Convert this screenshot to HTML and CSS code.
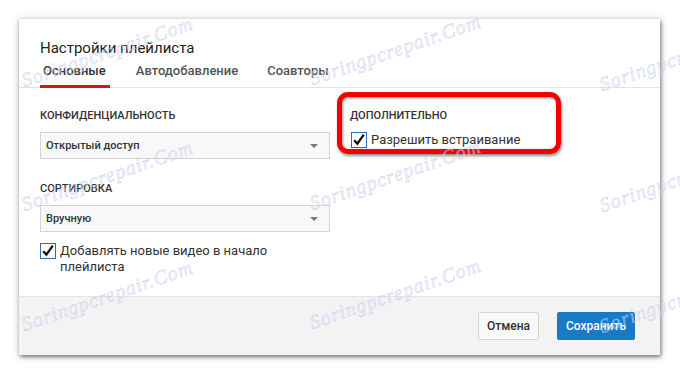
FILE: index.html
```html
<!DOCTYPE html>
<html>
  <head>
    <title>Настройки плейлиста</title>
    <meta charset="utf-8">
    <link rel="stylesheet" href="styles.css">
  </head>
  <body>
    <div class="dialog">
      <div class="dialog-header">
        <h2 class="dialog-title">Настройки плейлиста</h2>
        <div class="tabs">
          <span class="tab active">Основные</span>
          <span class="tab">Автодобавление</span>
          <span class="tab">Соавторы</span>
        </div>
      </div>

      <div class="dialog-body">
        <div class="column left">
          <div class="section-label">Конфиденциальность</div>
          <div class="select">
            <span>Открытый доступ</span>
            <span class="arrow"></span>
          </div>
          <div class="section-label second">Сортировка</div>
          <div class="select">
            <span>Вручную</span>
            <span class="arrow"></span>
          </div>
          <label class="check">
            <svg class="box" width="16" height="16" viewBox="0 0 16 16">
              <rect x="0.5" y="0.5" width="15" height="15" fill="#fff" stroke="#2d6db5"/>
              <path d="M3.2 8.2 L6.4 11.6 L12.8 2.6" fill="none" stroke="#111" stroke-width="2.3"/>
            </svg>
            <span>Добавлять новые видео в начало плейлиста</span>
          </label>
        </div>
        <div class="column right">
          <div class="section-label">Дополнительно</div>
          <label class="check single">
            <svg class="box" width="16" height="16" viewBox="0 0 16 16">
              <rect x="0.5" y="0.5" width="15" height="15" fill="#fff" stroke="#2d6db5"/>
              <path d="M3.2 8.2 L6.4 11.6 L12.8 2.6" fill="none" stroke="#111" stroke-width="2.3"/>
            </svg>
            <span>Разрешить встраивание</span>
          </label>
        </div>
        <!-- красная рамка-выделение поверх блока -->
        <div class="highlight"></div>
      </div>

      <div class="dialog-footer">
        <button type="button" class="btn cancel">Отмена</button>
        <button type="button" class="btn primary">Сохранить</button>
      </div>
    </div>

    <div class="watermarks">
      <span class="wm" style="left:26px;top:68px">Soringpcrepair.Com</span>
      <span class="wm" style="left:314px;top:66px">Soringpcrepair.Com</span>
      <span class="wm" style="left:604px;top:72px">Soringpcrepair.Com</span>
      <span class="wm" style="left:26px;top:192px">Soringpcrepair.Com</span>
      <span class="wm" style="left:314px;top:191px">Soringpcrepair.Com</span>
      <span class="wm" style="left:604px;top:193px">Soringpcrepair.Com</span>
      <span class="wm" style="left:26px;top:312px">Soringpcrepair.Com</span>
      <span class="wm" style="left:314px;top:310px">Soringpcrepair.Com</span>
      <span class="wm" style="left:604px;top:314px">Soringpcrepair.Com</span>
    </div>
  </body>
</html>
```

FILE: styles.css
```css
body {
  margin: 0;
  padding: 19px 20px 20px 19px;
  background: #fff;
  font-family: Roboto, "Liberation Sans", sans-serif;
  color: #222;
}
.dialog {
  width: 641px;
  height: 336px;
  background: #fff;
  display: flex;
  flex-direction: column;
  box-shadow: 1px 2px 4px rgba(0, 0, 0, 0.5), 0 0 9px rgba(0, 0, 0, 0.15);
}
.dialog-header {
  padding: 20px 0 0 0;
  border-bottom: 1px solid #e2e2e2;
}
.dialog-title {
  margin: 0 0 1px 21px;
  font-size: 15px;
  line-height: 18px;
  font-weight: 400;
  color: #222;
}
.tabs {
  display: flex;
  gap: 23px;
  padding-left: 21px;
}
.tab {
  padding: 5px 3px 6px;
  font-size: 13px;
  line-height: 16px;
  font-weight: 500;
  color: #555;
  border-bottom: 3px solid transparent;
  margin-bottom: -1px;
}
.tab.active {
  color: #333;
  border-bottom-color: #cc181e;
  padding-right: 4px;
}
.dialog-body {
  flex: 1;
  display: flex;
  gap: 20px;
  padding: 21px 21px 0 21px;
  position: relative;
}
.column.left {
  width: 290px;
}
.column.right {
  flex: 1;
}
.section-label {
  font-size: 11px;
  line-height: 14px;
  font-weight: 500;
  text-transform: uppercase;
  color: #333;
}
.section-label.second {
  margin-top: 23px;
}
.select {
  margin-top: 9px;
  height: 25px;
  border: 1px solid #d3d3d3;
  background: #f8f8f8;
  display: flex;
  align-items: center;
  justify-content: space-between;
  padding: 0 11px 0 5px;
  font-size: 11px;
  font-weight: 500;
  color: #333;
}
.arrow {
  width: 0;
  height: 0;
  border-left: 4px solid transparent;
  border-right: 4px solid transparent;
  border-top: 4px solid #777;
  margin-top: 1px;
}
.check {
  display: flex;
  align-items: flex-start;
  gap: 4px;
  margin-top: 11px;
  font-size: 13px;
  line-height: 16px;
  color: #333;
  width: 240px;
}
.check .box {
  flex: none;
}
.check.single {
  margin-top: 9px;
  margin-left: 1px;
  width: auto;
}
.highlight {
  position: absolute;
  left: 318px;
  top: 4px;
  width: 214px;
  height: 52px;
  border: 5px solid #f20000;
  border-radius: 11px;
  box-shadow: 1px 2px 3px rgba(0, 0, 0, 0.45), inset 1px 1px 3px rgba(0, 0, 0, 0.45);
  pointer-events: none;
}
.dialog-footer {
  height: 58px;
  border-top: 1px solid #e4e4e4;
  background: #f3f3f3;
  display: flex;
  align-items: center;
  justify-content: flex-end;
  gap: 18px;
  padding-right: 25px;
}
.btn {
  height: 28px;
  padding: 0;
  font-family: Roboto, "Liberation Sans", sans-serif;
  font-size: 12px;
  font-weight: 500;
  border-radius: 2px;
  border: 1px solid #d3d3d3;
  background: #f8f8f8;
  color: #333;
}
.btn.cancel {
  width: 61px;
}
.btn.primary {
  width: 78px;
  background: #167ac6;
  border-color: #167ac6;
  color: #fff;
}
.watermarks {
  position: absolute;
  left: 0;
  top: 0;
  width: 680px;
  height: 375px;
  overflow: hidden;
  pointer-events: none;
}
.wm {
  position: absolute;
  font-family: "Liberation Serif", serif;
  font-style: italic;
  font-size: 20px;
  line-height: 24px;
  letter-spacing: 1px;
  color: rgba(232, 234, 250, 0.45);
  -webkit-text-stroke: 0.6px rgba(180, 188, 228, 0.5);
  transform: rotate(-19deg);
  transform-origin: left bottom;
  white-space: nowrap;
}
```
